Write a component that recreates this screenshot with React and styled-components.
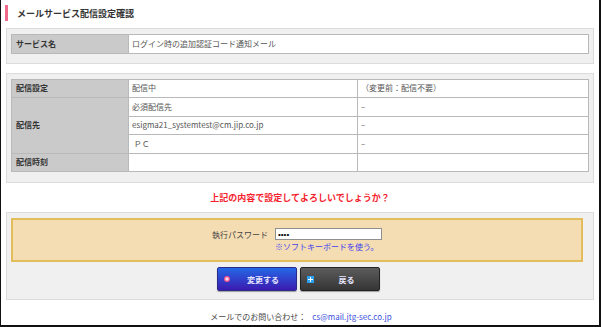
import React from 'react'
import styled, { createGlobalStyle } from 'styled-components'

const GlobalStyle = createGlobalStyle`
  html, body {
    margin: 0;
    padding: 0;
    background: #fff;
  }
  body {
    font-family: "Noto Sans CJK JP", "Noto Sans", sans-serif;
    font-size: 8px;
    color: #444;
  }
  * { box-sizing: border-box; }
`

const Page = styled.div`
  width: 601px;
  height: 327px;
  border-left: 1px solid #111;
  border-right: 2px solid #111;
  border-bottom: 2px solid #111;
  padding-top: 5px;
  overflow: hidden;
`

const Title = styled.h1`
  margin: 0 0 7px 4px;
  height: 16px;
  display: flex;
  align-items: center;
  border-left: 3px solid #ef6a88;
  padding-left: 9px;
  font-size: 9px;
  font-weight: bold;
  color: #333;
`

const Panel = styled.div`
  margin: ${(p) => p.$top || 0}px 5px 0 5px;
  background: #f0f0f0;
  border: 1px solid #dcdcdc;
  padding: 5px ${(p) => p.$right || 4}px ${(p) => p.$bottom || 9}px 4px;
`

const Table = styled.table`
  width: 100%;
  border-collapse: collapse;
  background: #fff;
  table-layout: fixed;
`

const Label = styled.th`
  width: 117px;
  height: 18.5px;
  padding: 0 4px;
  background: #cacaca;
  border: 1px solid #b9b9b9;
  text-align: left;
  font-weight: bold;
  color: #333;
  font-size: 8px;
  line-height: 10px;
`

const Cell = styled.td`
  height: 18.5px;
  padding: 0 3px;
  border: 1px solid #b9b9b9;
  color: #555;
  font-size: 8px;
  line-height: 10px;
  width: ${(p) => p.$w || 'auto'};
  white-space: nowrap;
`

const Question = styled.p`
  margin: 0;
  height: 29px;
  display: flex;
  align-items: center;
  justify-content: center;
  color: #f5222d;
  font-weight: bold;
  font-size: 9px;
`

const PassBox = styled.div`
  background: #f5ddb3;
  border: 2px solid #e3bd5c;
  height: 44px;
  display: grid;
  grid-template-columns: auto auto;
  justify-content: center;
  align-content: start;
  column-gap: 7px;
  row-gap: 1px;
  padding-top: 8px;
`

const PassLabel = styled.span`
  display: flex;
  align-items: center;
  justify-content: flex-end;
  color: #444;
  font-size: 8px;
`

const PassInput = styled.input`
  width: 107px;
  height: 12px;
  margin: 0;
  padding: 0 2px;
  border: 1px solid #8f8f8f;
  background: #fff;
  font-size: 8px;
  color: #000;
  outline: none;
`

const SoftKey = styled.a`
  grid-column: 2;
  color: #4040f0;
  font-size: 8px;
  text-decoration: none;
  line-height: 11px;
`

const Buttons = styled.div`
  display: flex;
  justify-content: center;
  gap: 3px;
  margin-top: 5px;
  padding-left: 3px;
`

const Button = styled.button`
  width: 80px;
  height: 24px;
  display: flex;
  align-items: center;
  padding: 0 0 0 6px;
  border-radius: 2px;
  border: 1px solid ${(p) => (p.$primary ? '#2a2a8a' : '#222')};
  background: ${(p) =>
    p.$primary
      ? 'linear-gradient(#2568e6, #3b1ab0)'
      : 'linear-gradient(#5c5c5c, #353535)'};
  box-shadow: 0 1px 1px rgba(0, 0, 0, 0.35);
  color: #e8e6ff;
  font-family: "Noto Sans CJK JP", sans-serif;
  font-size: 8px;
  font-weight: bold;
  cursor: pointer;
`

const ButtonText = styled.span`
  flex: 1;
  text-align: center;
`

const Dot = styled.span`
  width: 6px;
  height: 6px;
  border-radius: 50%;
  background: radial-gradient(circle, #ffd0e0 0 25%, #f0508a 55%);
`

const PlusSquare = styled.span`
  width: 7px;
  height: 7px;
  background: #2aa0f0;
  position: relative;
  &::before, &::after {
    content: '';
    position: absolute;
    background: #fff;
  }
  &::before { left: 3px; top: 1px; width: 1px; height: 5px; }
  &::after { left: 1px; top: 3px; width: 5px; height: 1px; }
`

const Footer = styled.p`
  margin: 0;
  height: 32px;
  display: flex;
  align-items: center;
  justify-content: center;
  gap: 6px;
  font-size: 8px;
  color: #444;
  padding-left: 2px;
`

const Mail = styled.a`
  color: #3b4fe0;
  text-decoration: none;
`

const App = () => {
  return (
    <Page>
      <GlobalStyle />
      <Title>メールサービス配信設定確認</Title>

      <Panel>
        <Table>
          <tbody>
            <tr>
              <Label>サービス名</Label>
              <Cell>ログイン時の追加認証コード通知メール</Cell>
            </tr>
          </tbody>
        </Table>
      </Panel>

      <Panel $top={9} $bottom={10}>
        <Table>
          <tbody>
            <tr>
              <Label>配信設定</Label>
              <Cell $w="229px">配信中</Cell>
              <Cell>（変更前：配信不要）</Cell>
            </tr>
            <tr>
              <Label rowSpan={3}>配信先</Label>
              <Cell>必須配信先</Cell>
              <Cell>–</Cell>
            </tr>
            <tr>
              <Cell>esigma21_systemtest@cm.jip.co.jp</Cell>
              <Cell>–</Cell>
            </tr>
            <tr>
              <Cell>&nbsp;ＰＣ</Cell>
              <Cell>–</Cell>
            </tr>
            <tr>
              <Label>配信時刻</Label>
              <Cell></Cell>
              <Cell></Cell>
            </tr>
          </tbody>
        </Table>
      </Panel>

      <Question>上記の内容で設定してよろしいでしょうか？</Question>

      <Panel $right={10} $bottom={8}>
        <PassBox>
          <PassLabel>執行パスワード</PassLabel>
          <PassInput type="password" defaultValue="1234" readOnly />
          <SoftKey href="#">※ソフトキーボードを使う。</SoftKey>
        </PassBox>
        <Buttons>
          <Button $primary>
            <Dot />
            <ButtonText>変更する</ButtonText>
          </Button>
          <Button>
            <PlusSquare />
            <ButtonText>戻る</ButtonText>
          </Button>
        </Buttons>
      </Panel>

      <Footer>
        <span>メールでのお問い合わせ：</span>
        <Mail href="#">cs@mail.jtg-sec.co.jp</Mail>
      </Footer>
    </Page>
  )
}

export default App
